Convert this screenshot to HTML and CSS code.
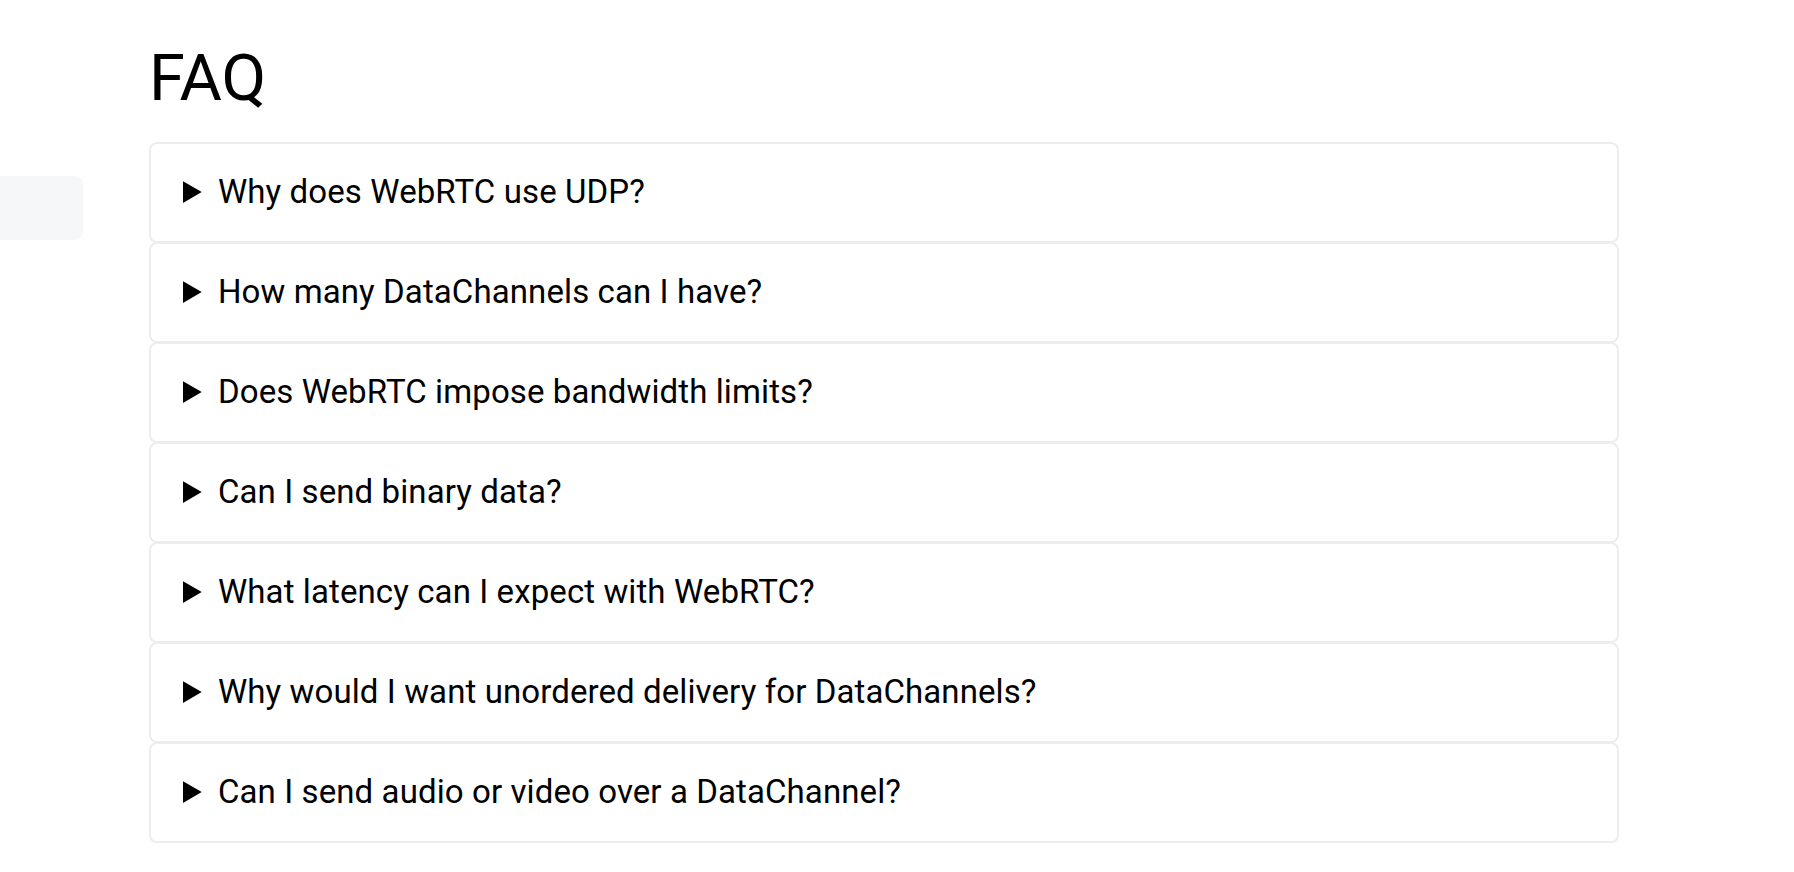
FILE: index.html
```html
<!DOCTYPE html>
<html lang="en">
<head>
<meta charset="utf-8">
<title>FAQ</title>
<link rel="stylesheet" href="styles.css">
</head>
<body>
<div class="layout">
  <aside class="sidebar">
    <div class="side-item"></div>
  </aside>
  <main class="main">
    <h1 class="title">FAQ</h1>
    <div class="faq-list">
      <details class="faq"><summary class="q">Why does WebRTC use UDP?</summary></details>
      <details class="faq"><summary class="q">How many DataChannels can I have?</summary></details>
      <details class="faq"><summary class="q">Does WebRTC impose bandwidth limits?</summary></details>
      <details class="faq"><summary class="q">Can I send binary data?</summary></details>
      <details class="faq"><summary class="q">What latency can I expect with WebRTC?</summary></details>
      <details class="faq"><summary class="q">Why would I want unordered delivery for DataChannels?</summary></details>
      <details class="faq"><summary class="q">Can I send audio or video over a DataChannel?</summary></details>
    </div>
  </main>
</div>
</body>
</html>
```
FILE: styles.css
```css
html, body {
  margin: 0;
  padding: 0;
  background: #ffffff;
}
body {
  font-family: Roboto, "Liberation Sans", Arial, sans-serif;
  color: #000;
}
.layout {
  display: flex;
  align-items: flex-start;
}
.sidebar {
  width: 83px;
  flex: none;
  padding-top: 176px;
}
.side-item {
  height: 64px;
  background: #f6f7f9;
  border-radius: 0 8px 8px 0;
}
.main {
  margin-left: 66px;
  width: 1470px;
  flex: none;
}
.title {
  margin: 40px 0 26px;
  font-size: 65px;
  font-weight: 400;
  line-height: 76px;
}
.faq-list {
  display: flex;
  flex-direction: column;
}
.faq {
  border: 2px solid #ececf1;
  border-radius: 8px;
  background: #fff;
}
.faq + .faq {
  margin-top: -1px;
}
.q {
  padding: 28px 32px 30px;
  font-size: 33px;
  line-height: 39px;
  letter-spacing: 0.1px;
  cursor: pointer;
}
```
